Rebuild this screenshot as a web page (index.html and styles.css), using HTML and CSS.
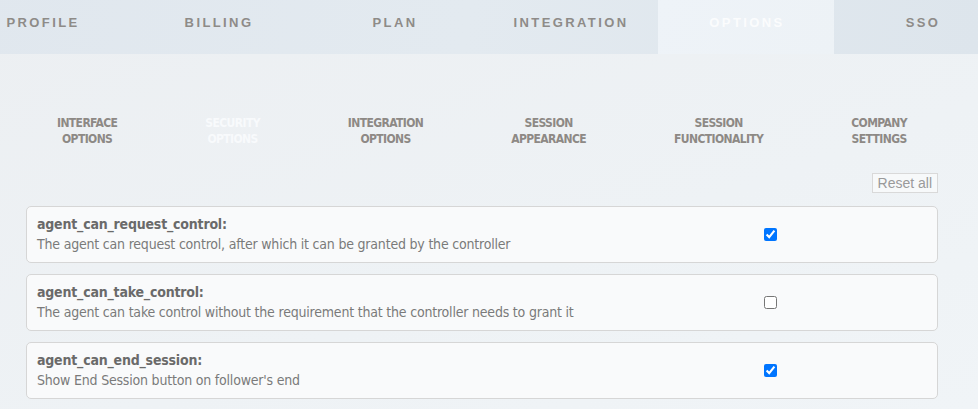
FILE: index.html
```html
<!DOCTYPE html>
<html>
<head>
<meta charset="utf-8">
<link rel="stylesheet" href="styles.css">
</head>
<body>
<div class="page">
  <nav class="tabs">
    <div class="tab">PROFILE</div>
    <div class="tab">BILLING</div>
    <div class="tab">PLAN</div>
    <div class="tab">INTEGRATION</div>
    <div class="tab active">OPTIONS</div>
    <div class="tab">SSO</div>
  </nav>
  <main class="content">
    <div class="subtabs">
      <div class="subtab">INTERFACE<br>OPTIONS</div>
      <div class="subtab active">SECURITY<br>OPTIONS</div>
      <div class="subtab">INTEGRATION<br>OPTIONS</div>
      <div class="subtab">SESSION<br>APPEARANCE</div>
      <div class="subtab">SESSION<br>FUNCTIONALITY</div>
      <div class="subtab">COMPANY<br>SETTINGS</div>
    </div>
    <div class="reset-row"><button class="reset">Reset all</button></div>
    <div class="cards">
      <div class="card">
        <div class="label">
          <div class="title">agent_can_request_control:</div>
          <div class="desc">The agent can request control, after which it can be granted by the controller</div>
        </div>
        <div class="check"><input type="checkbox" checked></div>
      </div>
      <div class="card">
        <div class="label">
          <div class="title">agent_can_take_control:</div>
          <div class="desc">The agent can take control without the requirement that the controller needs to grant it</div>
        </div>
        <div class="check"><input type="checkbox"></div>
      </div>
      <div class="card">
        <div class="label">
          <div class="title">agent_can_end_session:</div>
          <div class="desc">Show End Session button on follower's end</div>
        </div>
        <div class="check"><input type="checkbox" checked></div>
      </div>
    </div>
  </main>
</div>
</body>
</html>
```
FILE: styles.css
```css
html, body {
  margin: 0;
  padding: 0;
}
body {
  width: 978px;
  height: 409px;
  overflow: hidden;
  background: linear-gradient(160deg, #eceff2 0%, #eef2f5 60%, #f0f4f7 100%);
  font-family: "Liberation Sans", Arial, sans-serif;
}
.tabs {
  display: flex;
  height: 54px;
  margin-left: -46px;
  background: linear-gradient(100deg, #e0e7ee 0%, #e3eaf0 50%, #dde5ec 100%);
}
.tab {
  flex: 0 0 176px;
  display: flex;
  align-items: center;
  justify-content: center;
  padding: 0 0 10px 2px;
  box-sizing: border-box;
  font-size: 13px;
  font-weight: bold;
  letter-spacing: 2.4px;
  color: #8e8b88;
}
.tab.active {
  background: linear-gradient(120deg, #eef3f8 0%, #edf2f6 100%);
  color: #fbfcfd;
}
.content {
  padding: 61px 40px 0 26px;
}
.subtabs {
  display: flex;
  justify-content: space-between;
  padding: 0 31px;
}
.subtab {
  font-family: "DejaVu Sans Condensed", "DejaVu Sans", sans-serif;
  font-weight: bold;
  font-size: 12px;
  letter-spacing: -0.6px;
  line-height: 16px;
  text-align: center;
  color: #8d8985;
}
.subtab.active {
  color: #f8fafc;
}
.reset-row {
  display: flex;
  justify-content: flex-end;
  margin-top: 26px;
}
.reset {
  height: 20px;
  padding: 0 5px;
  border: 1px solid #d9d9d9;
  background: #f7f9fa;
  font-family: "Liberation Sans", Arial, sans-serif;
  font-size: 14px;
  color: #9a9a9a;
  line-height: 18px;
}
.cards {
  display: flex;
  flex-direction: column;
  gap: 11px;
  margin-top: 13px;
}
.card {
  display: flex;
  align-items: center;
  height: 57px;
  box-sizing: border-box;
  border: 1px solid #d6d6d6;
  border-radius: 5px;
  background: #f9fafb;
}
.label {
  flex: 1;
  min-width: 0;
  white-space: nowrap;
  padding: 7px 10px 7px;
  font-family: "DejaVu Sans Condensed", "DejaVu Sans", sans-serif;
  font-size: 14px;
  letter-spacing: -0.2px;
}
.title {
  font-weight: bold;
  line-height: 19px;
  color: #6a6a6a;
}
.desc {
  line-height: 21px;
  color: #7a7a7a;
}
.check {
  flex: 0 0 334px;
  display: flex;
  justify-content: center;
}
.check input {
  margin: 0;
  width: 13px;
  height: 13px;
}
```
